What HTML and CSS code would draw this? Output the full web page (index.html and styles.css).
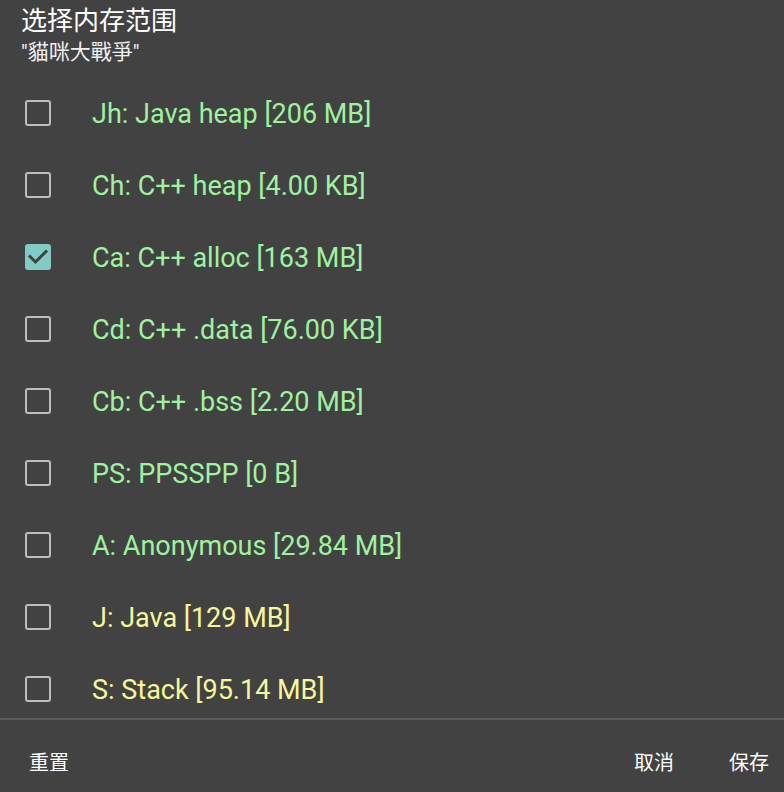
FILE: index.html
```html
<!DOCTYPE html>
<html>
<head>
<meta charset="utf-8">
<link rel="stylesheet" href="styles.css">
</head>
<body>
<div class="dialog">
  <div class="header">
    <div class="title">选择内存范围</div>
    <div class="subtitle">"貓咪大戰爭"</div>
  </div>
  <div class="list">
    <div class="row"><span class="box"></span><span class="label green">Jh: Java heap [206 MB]</span></div>
    <div class="row"><span class="box"></span><span class="label green">Ch: C++ heap [4.00 KB]</span></div>
    <div class="row"><span class="box checked"><svg viewBox="0 0 26 26" width="26" height="26"><path d="M5 12.5 L10.5 18 L21 7.5" fill="none" stroke="#424242" stroke-width="3" stroke-linecap="square"/></svg></span><span class="label green">Ca: C++ alloc [163 MB]</span></div>
    <div class="row"><span class="box"></span><span class="label green">Cd: C++ .data [76.00 KB]</span></div>
    <div class="row"><span class="box"></span><span class="label green">Cb: C++ .bss [2.20 MB]</span></div>
    <div class="row"><span class="box"></span><span class="label green">PS: PPSSPP [0 B]</span></div>
    <div class="row"><span class="box"></span><span class="label green">A: Anonymous [29.84 MB]</span></div>
    <div class="row"><span class="box"></span><span class="label yellow">J: Java [129 MB]</span></div>
    <div class="row"><span class="box"></span><span class="label yellow">S: Stack [95.14 MB]</span></div>
  </div>
  <div class="divider"></div>
  <div class="buttons">
    <span class="btn">重置</span>
    <span class="spacer"></span>
    <span class="btn">取消</span>
    <span class="btn">保存</span>
  </div>
</div>
</body>
</html>
```
FILE: styles.css
```css
html, body {
  margin: 0;
  padding: 0;
  background: #424242;
}
.dialog {
  width: 784px;
  height: 792px;
  background: #424242;
  display: flex;
  flex-direction: column;
  font-family: Roboto, "Noto Sans CJK SC", sans-serif;
  overflow: hidden;
}
.header {
  padding: 2px 0 0 21px;
  height: 78px;
  box-sizing: border-box;
  color: #ffffff;
  flex: none;
}
.title {
  font-size: 26px;
  line-height: 34px;
  font-family: "Noto Sans CJK SC", sans-serif;
}
.subtitle {
  font-size: 21px;
  line-height: 26px;
  margin-top: 3px;
  font-family: Roboto, "Noto Sans CJK TC", sans-serif;
  color: #f2f2f2;
}
.list {
  display: flex;
  flex-direction: column;
  height: 640px;
  overflow: hidden;
  flex: none;
}
.row {
  height: 72px;
  flex: none;
  display: flex;
  align-items: center;
  padding-left: 25px;
}
.box {
  width: 26px;
  height: 26px;
  box-sizing: border-box;
  border: 2.5px solid #bdbdbd;
  border-radius: 3px;
  flex: none;
  position: relative;
  top: -1px;
}
.box.checked {
  border: none;
  background: #80cbc4;
}
.box svg {
  display: block;
}
.label {
  margin-left: 41px;
  font-size: 27px;
  line-height: 32px;
}
.green { color: #9ef39e; }
.yellow { color: #f7f79a; }
.divider {
  height: 2px;
  background: #5c5c5c;
  flex: none;
}
.buttons {
  height: 72px;
  flex: none;
  display: flex;
  align-items: center;
  padding: 10px 15px 0 29px;
  box-sizing: border-box;
}
.btn {
  color: #ffffff;
  font-size: 20px;
  font-family: "Noto Sans CJK SC", sans-serif;
  margin-left: 55px;
}
.btn:first-child { margin-left: 0; }
.spacer { flex: 1; }
```
